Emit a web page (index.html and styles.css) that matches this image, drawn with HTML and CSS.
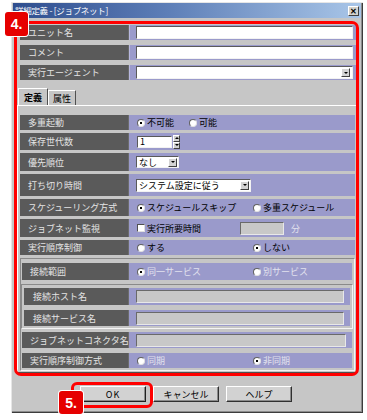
FILE: index.html
```html
<!DOCTYPE html>
<html lang="ja">
<head>
<meta charset="utf-8">
<link rel="stylesheet" href="styles.css">
</head>
<body>
<div class="window">
  <div class="titlebar">
    <span class="title">詳細定義 - [ジョブネット]</span>
    <span class="close">✕</span>
  </div>

  <div class="top">
    <div class="frow"><div class="lbl">ユニット名</div><div class="val tv"><span class="textbox grow"></span></div></div>
    <div class="frow"><div class="lbl">コメント</div><div class="val tv"><span class="textbox grow"></span></div></div>
    <div class="frow"><div class="lbl">実行エージェント</div><div class="val tv"><span class="textbox grow combo"><span class="ddbtn"></span></span></div></div>
  </div>

  <div class="tabs">
    <span class="tab active">定義</span><span class="tab">属性</span>
  </div>

  <div class="panel">
    <div class="frow h15"><div class="lbl">多重起動</div><div class="val"><span class="opt w52"><span class="radio on"></span>不可能</span><span class="opt"><span class="radio"></span>可能</span></div></div>
    <div class="frow h17"><div class="lbl">保存世代数</div><div class="val"><span class="textbox gen">1</span><span class="spin"><span class="sb up"></span><span class="sb dn"></span></span></div></div>
    <div class="frow h18"><div class="lbl">優先順位</div><div class="val"><span class="select prio">なし<span class="ddbtn"></span></span></div></div>
    <div class="frow h22"><div class="lbl">打ち切り時間</div><div class="val"><span class="select cut">システム設定に従う<span class="ddbtn"></span></span></div></div>
    <div class="frow h17"><div class="lbl">スケジューリング方式</div><div class="val"><span class="opt w116"><span class="radio on"></span>スケジュールスキップ</span><span class="opt"><span class="radio"></span>多重スケジュール</span></div></div>
    <div class="frow h18"><div class="lbl">ジョブネット監視</div><div class="val"><span class="opt w103"><span class="check"></span>実行所要時間</span><span class="textbox dis mins"></span><span class="distext unit">分</span></div></div>
    <div class="frow h15"><div class="lbl">実行順序制御</div><div class="val"><span class="opt w116"><span class="radio"></span>する</span><span class="opt"><span class="radio on"></span>しない</span></div></div>

    <div class="group">
      <div class="frow h17"><div class="lbl g">接続範囲</div><div class="val"><span class="opt w116 distext"><span class="radio on"></span>同一サービス</span><span class="opt distext"><span class="radio"></span>別サービス</span></div></div>
      <div class="inner">
        <div class="frow h17"><div class="lbl in">接続ホスト名</div><div class="val pr"><span class="textbox dis grow"></span></div></div>
        <div class="frow h16"><div class="lbl in">接続サービス名</div><div class="val pr"><span class="textbox dis grow"></span></div></div>
      </div>
      <div class="frow h16 conn"><div class="lbl g">ジョブネットコネクタ名</div><div class="val pr"><span class="textbox dis grow"></span></div></div>
      <div class="frow h15 mode"><div class="lbl g">実行順序制御方式</div><div class="val"><span class="opt w116 distext"><span class="radio"></span>同期</span><span class="opt distext"><span class="radio on"></span>非同期</span></div></div>
    </div>
  </div>

  <div class="buttons">
    <span class="btn def">OK</span><span class="btn">キャンセル</span><span class="btn">ヘルプ</span>
  </div>
</div>

<div class="redframe"></div>
<div class="badge b4">4.</div>
<div class="okframe"></div>
<div class="badge b5">5.</div>
</body>
</html>
```
FILE: styles.css
```css
* { box-sizing: border-box; }

body {
  margin: 0;
  padding: 2px 0 0 11px;
  width: 367px;
  height: 420px;
  overflow: hidden;
  position: relative;
  background: #fff;
  font-family: "Noto Sans CJK JP", "Noto Sans", sans-serif;
  font-size: 9px;
  line-height: 1;
}

.window {
  width: 352px;
  height: 411px;
  padding: 1px 2px 0 2px;
  background: #c6c6c6;
  box-shadow: inset 1px 1px 0 #e6e6e6, inset -1px -1px 0 #3c3c3c, inset -2px -2px 0 #8c8c8c;
  display: flex;
  flex-direction: column;
}

.titlebar {
  height: 15px;
  display: flex;
  align-items: center;
  justify-content: space-between;
  padding: 0 2px 0 2px;
  background: linear-gradient(to right, #2e4d8e, #5e7fb8 45%, #a9c6e8);
  color: #fff;
}
.title { font-size: 8.5px; letter-spacing: -0.3px; }
.close {
  width: 11px;
  height: 10px;
  background: #d4d2cc;
  border: 1px solid;
  border-color: #fff #404040 #404040 #fff;
  color: #000;
  font-size: 8px;
  font-weight: bold;
  display: flex;
  align-items: center;
  justify-content: center;
}

.top {
  margin: 7px 4px 0 7px;
  display: flex;
  flex-direction: column;
  gap: 5px;
}

.frow { display: flex; height: 15px; }
.h15 { height: 15px; }
.h16 { height: 16px; }
.h17 { height: 17px; }
.h18 { height: 18px; }
.h22 { height: 22px; }

.lbl {
  width: 109px;
  flex: none;
  background: #5a5a5a;
  color: #e4e4e4;
  padding-left: 8px;
  display: flex;
  align-items: center;
  white-space: nowrap;
  overflow: hidden;
  box-shadow: inset -1px 0 0 #6c6c6c;
}
.lbl.g { width: 107px; padding-left: 8px; }
.lbl.in { width: 105px; padding-left: 9px; }

.val {
  flex: 1;
  background: #9a9acb;
  display: flex;
  align-items: center;
  padding-left: 8px;
  color: #000;
  white-space: nowrap;
}
.val.tv { padding: 0 4px 0 7px; box-shadow: inset 1px 0 0 #b8b8e0; }
.val.pr { padding: 0 6px 0 7px; }

.textbox {
  height: 13px;
  background: #fff;
  border: 1px solid;
  border-color: #5a5a5a #f2f2f2 #f2f2f2 #5a5a5a;
  display: flex;
  align-items: center;
  padding-left: 2px;
}
.grow { flex: 1; }
.combo { justify-content: flex-end; padding-right: 2px; }
.textbox.dis { background: #c8c8c8; border-color: #6a6a6a #e8e8e8 #e8e8e8 #6a6a6a; }
.textbox.gen { width: 35px; height: 12px; }
.textbox.mins { width: 44px; height: 13px; }

.ddbtn {
  width: 9px;
  height: 9px;
  background: #d4d4d4;
  border: 1px solid;
  border-color: #fff #404040 #404040 #fff;
  display: flex;
  align-items: center;
  justify-content: center;
}
.ddbtn::after {
  content: "";
  border-left: 2px solid transparent;
  border-right: 2px solid transparent;
  border-top: 2px solid #000;
}

.select {
  height: 12px;
  background: #fff;
  border: 1px solid;
  border-color: #5a5a5a #f2f2f2 #f2f2f2 #5a5a5a;
  display: flex;
  align-items: center;
  justify-content: space-between;
  padding: 0 1px 0 2px;
  margin-left: -1px;
}
.select.prio { width: 43px; }
.select.cut { width: 115px; height: 13px; }

.spin {
  display: flex;
  flex-direction: column;
  margin-left: 1px;
}
.sb {
  width: 7px;
  height: 7px;
  background: #d0d0d0;
  border: 1px solid;
  border-color: #fff #404040 #404040 #fff;
  display: flex;
  align-items: center;
  justify-content: center;
}
.sb.up::after {
  content: "";
  border-left: 2px solid transparent;
  border-right: 2px solid transparent;
  border-bottom: 2px solid #000;
}
.sb.dn::after {
  content: "";
  border-left: 2px solid transparent;
  border-right: 2px solid transparent;
  border-top: 2px solid #000;
}

.opt { display: flex; align-items: center; }
.w52 { width: 52px; }
.w103 { width: 103px; }
.w116 { width: 116px; }

.radio {
  width: 8px;
  height: 8px;
  border-radius: 50%;
  background: #fff;
  border: 1px solid #707070;
  border-color: #606060 #e0e0e0 #e0e0e0 #606060;
  margin-right: 2px;
  position: relative;
  flex: none;
}
.radio.on::after {
  content: "";
  position: absolute;
  left: 2px;
  top: 2px;
  width: 2px;
  height: 2px;
  background: #000;
}
.check {
  width: 8px;
  height: 8px;
  background: #fff;
  border: 1px solid;
  border-color: #505050 #e0e0e0 #e0e0e0 #505050;
  margin-right: 2px;
  flex: none;
}
.distext { color: #e2e2ee; }
.unit { margin-left: 7px; }

.tabs {
  margin: 8px 0 0 5px;
  height: 17px;
  display: flex;
  align-items: flex-end;
}
.tab {
  height: 15px;
  width: 28px;
  background: #c6c6c6;
  border: 1px solid;
  border-bottom: none;
  border-color: #fff #505050 transparent #fff;
  display: flex;
  align-items: center;
  justify-content: center;
  color: #000;
}
.tab.active { height: 17px; width: 30px; font-weight: bold; }

.panel {
  margin: 0 3px 0 4px;
  height: 268px;
  border: 1px solid;
  border-color: #fff #505050 #505050 #fff;
  padding: 9px 2px 0 2px;
  display: flex;
  flex-direction: column;
  gap: 3px;
}

.group {
  height: 113px;
  border: 1px solid;
  border-color: #8a8a8a #f4f4f4 #f4f4f4 #8a8a8a;
  padding: 4px 2px 0 1px;
  display: flex;
  flex-direction: column;
}
.inner {
  margin: 4px -1px 0 -1px;
  height: 45px;
  border: 1px solid;
  border-color: #8a8a8a #f4f4f4 #f4f4f4 #8a8a8a;
  padding: 3px 2px 0 2px;
  display: flex;
  flex-direction: column;
  gap: 5px;
}
.conn { margin-top: 3px; }
.mode { margin-top: 5px; }

.buttons {
  margin: 13px 0 0 67px;
  display: flex;
  gap: 7px;
}
.btn {
  width: 66px;
  height: 16px;
  background: #d2d2d2;
  border: 1px solid;
  border-color: #fff #303030 #303030 #fff;
  box-shadow: inset -1px -1px 0 #8a8a8a;
  display: flex;
  align-items: center;
  justify-content: center;
  color: #000;
}
.btn.def { border-color: #fff #202020 #202020 #fff; letter-spacing: 1px; }

.redframe {
  position: absolute;
  left: 14px;
  top: 21px;
  width: 345px;
  height: 355px;
  border: 3px solid #f00;
  border-radius: 7px;
}
.okframe {
  position: absolute;
  left: 71px;
  top: 382px;
  width: 82px;
  height: 26px;
  border: 3px solid #f00;
  border-radius: 6px;
}
.badge {
  position: absolute;
  background: #e60000;
  color: #fff;
  font-family: "Liberation Sans", Arial, sans-serif;
  font-weight: bold;
  font-size: 14px;
  border-radius: 3px;
  box-shadow: 0 0 0 1px #fff;
  display: flex;
  align-items: center;
  justify-content: center;
}
.b4 { left: 5px; top: 12px; width: 23px; height: 24px; }
.b5 { left: 59px; top: 391px; width: 24px; height: 23px; }
```
